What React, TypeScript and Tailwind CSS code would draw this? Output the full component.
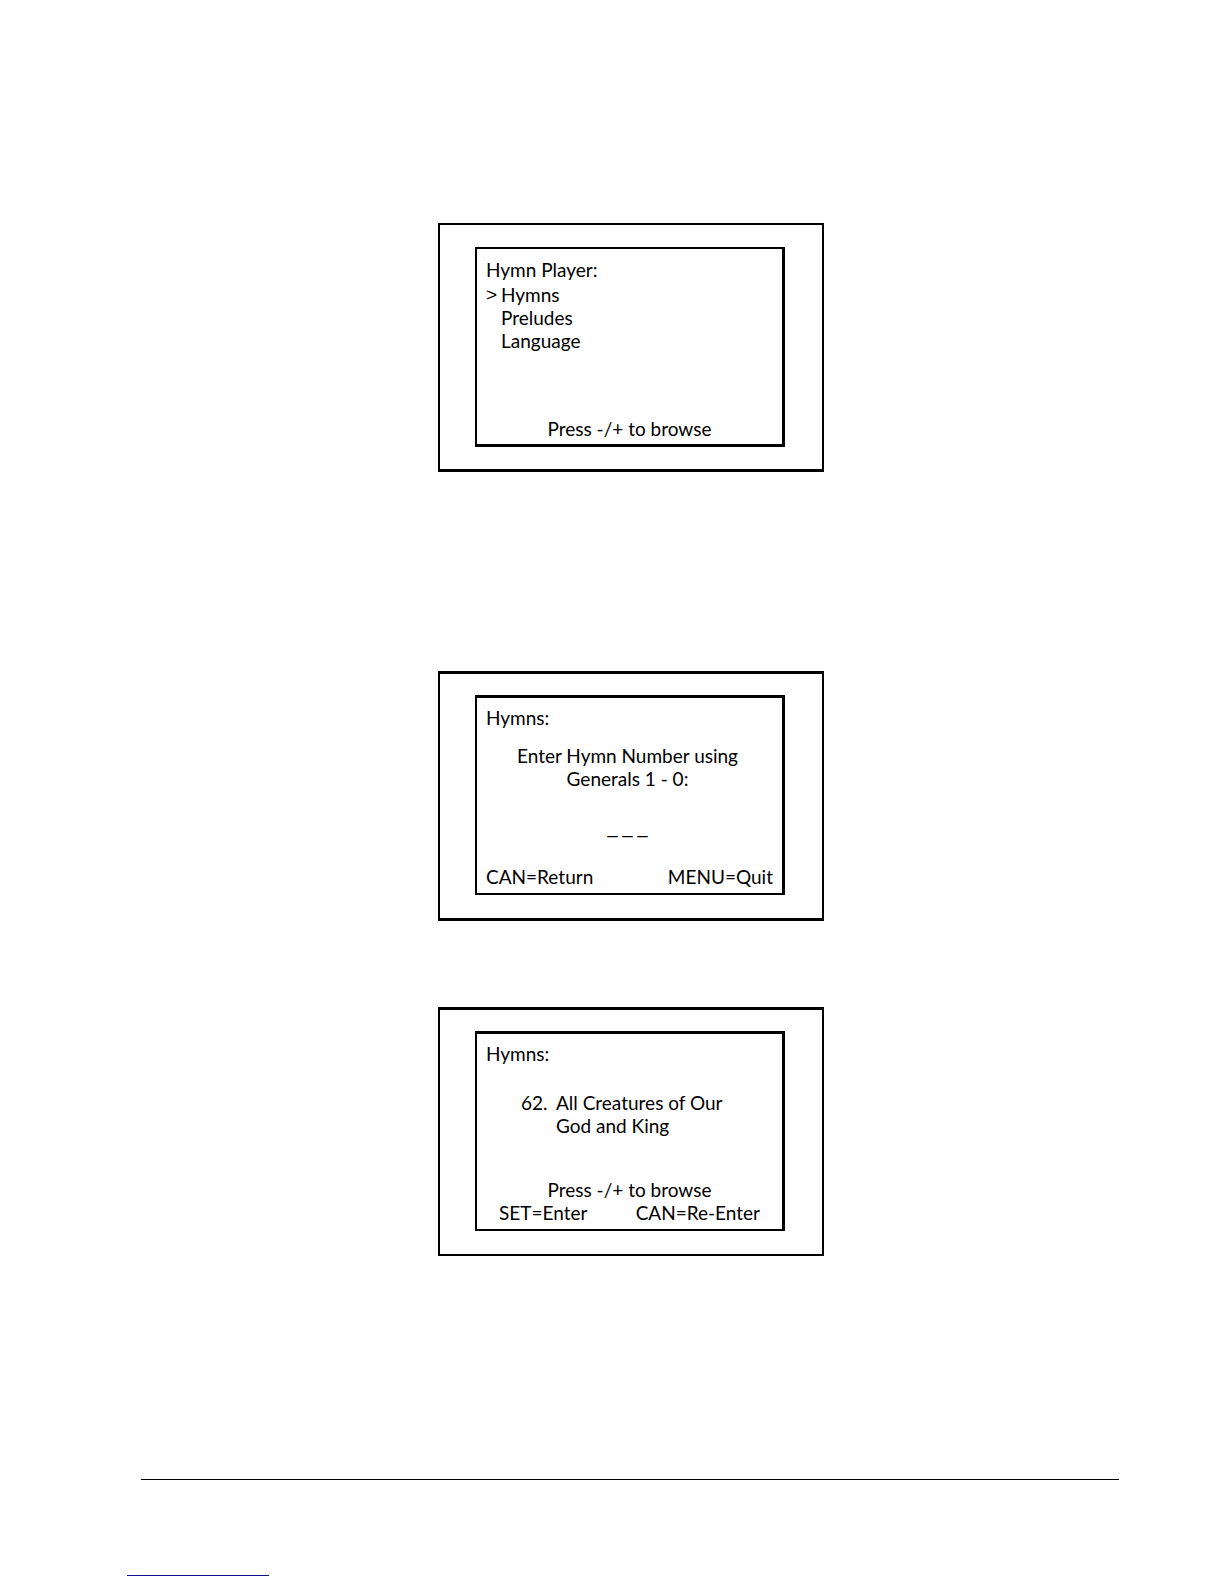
import type { ReactNode } from 'react'
import clsx from 'clsx'

const menuItems = ['Hymns', 'Preludes', 'Language']

function Display({ title, frame, screen, children }: {
  title: string
  frame: string
  screen: string
  children: ReactNode
}) {
  return (
    <section className={clsx('flex w-[386px] flex-col border-2 border-black pr-[37px] pl-[35px]', frame)}>
      <div className={clsx('flex min-h-[200px] flex-col border-2 border-r-[3px] border-black px-[9px]', screen)}>
        <h2>{title}</h2>
        {children}
      </div>
    </section>
  )
}

export default function App() {
  return (
    <div className="min-h-screen bg-white pt-[223px] pb-2 font-['Lato',sans-serif] text-[19px] leading-[23px] text-black">
      <main className="flex flex-col items-center pl-[38px]">
        <Display title="Hymn Player:" frame="border-b-[3px] py-[22px]" screen="border-b-[3px] pt-[9px] pb-1">
          <ul className="mt-[2px]">
            {menuItems.map((item, i) => (
              <li key={item} className="flex">
                <span className="w-[15px] font-['Liberation_Sans',sans-serif]">{i === 0 && '>'}</span>
                {item}
              </li>
            ))}
          </ul>
          <p className="mt-auto text-center">Press -/+ to browse</p>
        </Display>

        <Display title="Hymns:" frame="mt-[199px] border-y-[3px] pt-[21px] pb-[23px]" screen="border-t-[3px] pt-2 pb-[5px]">
          <p className="mt-[15px] pr-1 text-center">
            Enter Hymn Number using
            <br />
            Generals 1 - 0:
          </p>
          <p className="mt-auto mb-[26px] pr-1 text-center font-['Liberation_Sans',sans-serif] text-[18px]">_ _ _</p>
          <div className="flex justify-between">
            <span>CAN=Return</span>
            <span>MENU=Quit</span>
          </div>
        </Display>

        <Display title="Hymns:" frame="mt-[86px] border-t-[3px] pt-[21px] pb-[23px]" screen="border-t-[3px] pt-2 pb-[5px]">
          <div className="mt-[26px] flex pl-[35px]">
            <span className="w-[35px]">62.</span>
            <p>
              All Creatures of Our
              <br />
              God and King
            </p>
          </div>
          <p className="mt-auto text-center">Press -/+ to browse</p>
          <div className="flex justify-between px-[13px]">
            <span>SET=Enter</span>
            <span>CAN=Re-Enter</span>
          </div>
        </Display>
      </main>

      <footer className="mt-[223px]">
        <hr className="mr-[105px] ml-[141px] border-t border-black" />
        <div className="mt-[95px] ml-[127px] w-[142px] border-t border-[#10108c]" />
      </footer>
    </div>
  )
}
